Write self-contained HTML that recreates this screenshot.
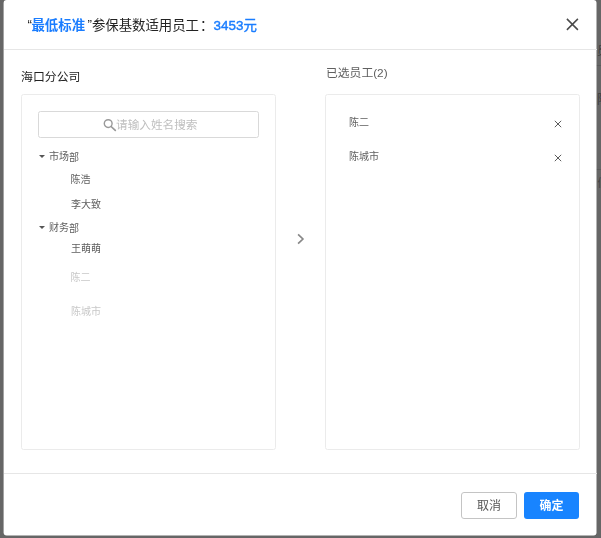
<!DOCTYPE html>
<html lang="zh-CN">
<head>
<meta charset="utf-8">
<title>参保基数适用员工</title>
<style>
*{box-sizing:border-box;margin:0;padding:0}
html,body{width:601px;height:538px;overflow:hidden;background:#666;}
body{position:relative;font-family:"Liberation Sans","Noto Sans CJK SC",sans-serif;color:#333;}
/* children positioned in page coordinates */
.bgp{position:absolute;left:0;top:0;width:601px;height:538px;overflow:hidden}
.bl{position:absolute;left:596px;width:5px;height:1px;background:#5a5a5a}
.page{position:absolute;left:0;top:0;width:601px;height:538px;will-change:transform}
.abs{position:absolute;white-space:nowrap;line-height:1;}
.title{left:27px;top:19px;font-size:13.4px;color:#222;}
.title .q1{position:relative;top:-1.3px;left:0.5px}
.title .q2{position:relative;top:-1.3px;margin-left:2.4px;margin-right:0}
.title .co{margin-left:1px;margin-right:0}
.title b{color:#1a7dff;font-weight:bold}
.title .num{color:#1a7dff;-webkit-text-stroke:0.4px #1a7dff;letter-spacing:0.1px}
.hline{position:absolute;left:3.5px;width:593px;height:1px;background:#e6e6e6}
.panel{position:absolute;top:94px;height:356px;border:1px solid #ebebeb;border-radius:2.5px;background:#fff}
.search{position:absolute;left:38px;top:111px;width:221px;height:27px;border:1px solid #d9d9d9;border-radius:2.5px;}
.t10{font-size:10px;color:#606060}
.dis{color:#c8c8c8}
.btn{position:absolute;top:492px;height:27px;width:55px;border-radius:3px;font-size:12px;text-align:center;}
.btn span{position:absolute;left:0;right:0;top:7px;line-height:1;transform:translateY(0.9px) rotate(0.01deg)}
.cancel{left:461px;width:56px;border:1px solid #c4c4c4;color:#555;background:#fff}
.cancel span{top:6px}
.ok{left:524px;background:#1884ff;color:#fff;font-weight:bold;}
.caret{position:absolute;width:0;height:0;border-left:3px solid transparent;border-right:3px solid transparent;border-top:3.5px solid #555}
</style>
</head>
<body>
<div class="bgp">
  <div class="abs" style="left:597px;top:46px;font-size:11px;color:#3c3c3c">员</div>
  <div class="bl" style="top:65px"></div>
  <div class="abs" style="left:597px;top:94px;font-size:12px;color:#3c3c3c">陈</div>
  <div class="bl" style="top:169px"></div>
  <div class="abs" style="left:597.5px;top:178px;font-size:11px;color:#444">们</div>
</div>
<svg class="abs" style="left:0;top:0" width="601" height="538" viewBox="0 0 601 538"><rect x="3.6" y="0" width="592.9" height="535.4" rx="3" ry="3" fill="#fff"/></svg>
<div class="page">
  <div class="abs title" style="transform:translateY(0.4px) rotate(0.01deg)"><span class="q1">“</span><b>最低标准</b><span class="q2">”</span><span class="tt">参保基数适用员工</span><span class="co">：</span><span class="num">3453元</span></div>
  <svg class="abs" style="left:566px;top:18px" width="13" height="13" viewBox="0 0 13 13"><path d="M0.9 0.9L11.9 11.9M11.9 0.9L0.9 11.9" stroke="#4a4a4a" stroke-width="1.5" fill="none"/></svg>
  <div class="hline" style="top:49px"></div>

  <div class="abs" style="left:21px;top:71px;transform:translateY(0.7px) rotate(0.01deg);font-size:11.9px;color:#222">海口分公司</div>
  <div class="abs" style="left:326px;top:67px;transform:translateY(0.9px) rotate(0.01deg);font-size:11.8px;color:#606060">已选员工(2)</div>

  <div class="panel" style="left:21px;width:254.6px"></div>
  <div class="panel" style="left:325.4px;width:254.6px"></div>

  <div class="search"></div>
  <svg class="abs" style="left:100px;top:116px" width="18" height="18" viewBox="0 0 18 18"><circle cx="8.2" cy="7.6" r="3.9" stroke="#999" stroke-width="1.4" fill="none"/><path d="M11.1 10.5L15.3 14.4" stroke="#999" stroke-width="1.7" stroke-linecap="round"/></svg>
  <div class="abs" style="left:116px;top:119px;transform:translateY(-0.05px) rotate(0.01deg);font-size:11.65px;color:#bfbfbf">请输入姓名搜索</div>

  <div class="caret" style="left:39px;top:155px"></div>
  <div class="abs t10" style="left:49px;top:152px;transform:translateY(0.5px) rotate(0.01deg)">市场部</div>
  <div class="abs t10" style="left:70.5px;top:175px">陈浩</div>
  <div class="abs t10" style="left:70.5px;top:200px;transform:translateY(0.4px) rotate(0.01deg)">李大致</div>
  <div class="caret" style="left:39px;top:226px"></div>
  <div class="abs t10" style="left:49px;top:223px;transform:translateY(0.5px) rotate(0.01deg)">财务部</div>
  <div class="abs t10" style="left:70.5px;top:244px;transform:translateY(0.3px) rotate(0.01deg)">王萌萌</div>
  <div class="abs t10 dis" style="left:70.5px;top:273px">陈二</div>
  <div class="abs t10 dis" style="left:70.5px;top:306px;transform:translateY(0.8px) rotate(0.01deg)">陈城市</div>

  <svg class="abs" style="left:295.5px;top:233.3px" width="10" height="12" viewBox="0 0 10 12"><path d="M2.1 1.3L6.9 6L2.1 10.7" stroke="#888" stroke-width="1.7" fill="none"/></svg>

  <div class="abs t10" style="left:348.5px;top:118px;transform:translateY(0.2px) rotate(0.01deg)">陈二</div>
  <div class="abs t10" style="left:348.5px;top:152px;transform:translateY(0.2px) rotate(0.01deg)">陈城市</div>
  <svg class="abs" style="left:554px;top:120.1px" width="8" height="8" viewBox="0 0 8 8"><path d="M0.8 0.8L7.2 7.2M7.2 0.8L0.8 7.2" stroke="#5c5c5c" stroke-width="1" fill="none"/></svg>
  <svg class="abs" style="left:554px;top:154px" width="8" height="8" viewBox="0 0 8 8"><path d="M0.8 0.8L7.2 7.2M7.2 0.8L0.8 7.2" stroke="#5c5c5c" stroke-width="1" fill="none"/></svg>

  <div class="hline" style="top:473px"></div>
  <div class="btn cancel"><span>取消</span></div>
  <div class="btn ok"><span>确定</span></div>
</div>
</body>
</html>
